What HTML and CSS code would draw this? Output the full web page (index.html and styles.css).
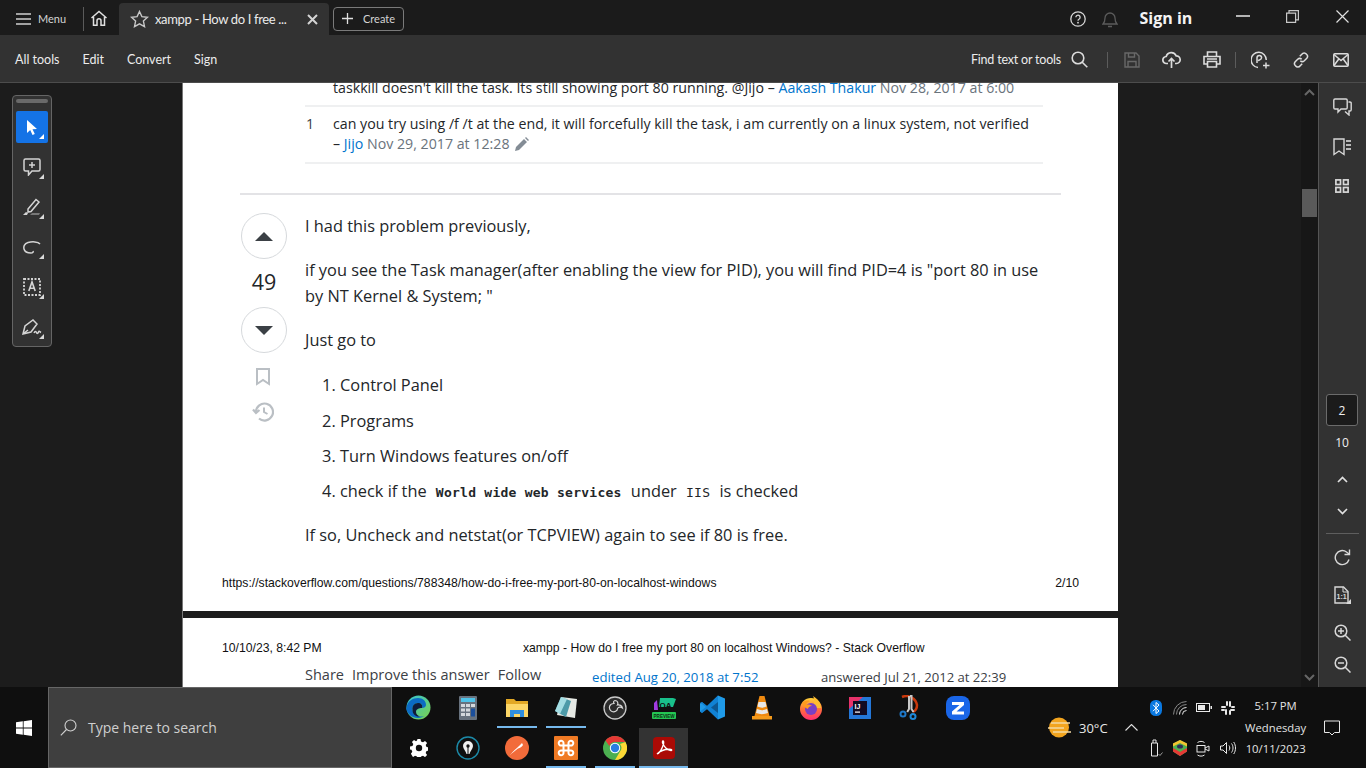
FILE: index.html
```html
<!DOCTYPE html>
<html lang="en">
<head>
<meta charset="utf-8">
<title>xampp - How do I free my port 80 on localhost Windows?</title>
<link rel="stylesheet" href="styles.css">
</head>
<body>
<div class="app">
  <header class="titlebar">
    <button class="menu-btn">
      <svg width="15" height="12" viewBox="0 0 15 12"><path d="M0 1h15M0 6h15M0 11h15" stroke="#d0d0d0" stroke-width="1.4"/></svg>
      <span>Menu</span>
    </button>
    <span class="title-sep"></span>
    <svg class="home" width="18" height="17" viewBox="0 0 18 17" fill="none" stroke="#e0e0e0" stroke-width="1.5"><path d="M1.5 8 9 1.5 16.500 8M3.500 7v8.300h3.500v-4.500a2 2 0 0 1 4 0v4.500h3.500V7"/></svg>
    <div class="tab">
      <svg width="19" height="18" viewBox="0 0 19 18" fill="none" stroke="#c8c8c8" stroke-width="1.4"><path d="m9.500 1.500 2.400 5.100 5.600.7-4.100 3.800 1.100 5.500-5-2.700-5 2.700 1.100-5.500L1.500 7.300l5.600-.7z"/></svg>
      <span class="tab-title">xampp - How do I free ...</span>
      <svg class="tab-close" width="11" height="11" viewBox="0 0 11 11"><path d="m1 1 9 9M10 1l-9 9" stroke="#d4d4d4" stroke-width="2"/></svg>
    </div>
    <button class="create-btn">
      <svg width="11" height="11" viewBox="0 0 11 11"><path d="M5.500 0v11M0 5.500h11" stroke="#e0e0e0" stroke-width="1.300"/></svg>
      <span>Create</span>
    </button>
    <div class="title-right">
      <svg class="help" width="16" height="16" viewBox="0 0 16 16" fill="none"><circle cx="8" cy="8" r="7.200" stroke="#d6d6d6" stroke-width="1.300"/><path d="M5.900 6.300a2.100 2.100 0 1 1 3.300 1.700c-.8.500-1.200.9-1.200 1.700" stroke="#d6d6d6" stroke-width="1.300"/><circle cx="8" cy="11.700" r=".9" fill="#d6d6d6"/></svg>
      <svg class="bell" width="16" height="18" viewBox="0 0 16 18" fill="none" stroke="#5c5c5c" stroke-width="1.300"><path d="M1 14c1.500-1.500 2-2.500 2-6a5 5 0 0 1 10 0c0 3.500.5 4.500 2 6zM6 16.500h4"/></svg>
      <span class="sign-in">Sign in</span>
      <span class="win-ctrl min"><svg width="14" height="2" viewBox="0 0 14 2"><path d="M0 1h14" stroke="#e8e8e8" stroke-width="1.500"/></svg></span>
      <span class="win-ctrl max"><svg width="13" height="13" viewBox="0 0 13 13" fill="none" stroke="#c8c8c8" stroke-width="1.200"><path d="M.6 3.100h9v9.300h-9zM3 3V.6h9.400v9.300H9.800"/></svg></span>
      <span class="win-ctrl cls"><svg width="13" height="13" viewBox="0 0 13 13"><path d="m.5.500 12 12M12.500.500l-12 12" stroke="#e0e0e0" stroke-width="1.200"/></svg></span>
    </div>
  </header>

  <nav class="toolbar">
    <a class="tool-link first">All tools</a>
    <a class="tool-link">Edit</a>
    <a class="tool-link">Convert</a>
    <a class="tool-link">Sign</a>
    <div class="toolbar-right">
      <span class="find">Find text or tools</span>
      <svg class="ic-search" width="17" height="17" viewBox="0 0 17 17" fill="none" stroke="#dcdcdc" stroke-width="1.600"><circle cx="7" cy="7" r="5.800"/><path d="m11 11 5.300 5.300"/></svg>
      <span class="tb-sep"></span>
      <svg class="ic-save" width="16" height="16" viewBox="0 0 16 16" fill="none" stroke="#686868" stroke-width="1.400"><path d="M1 1h11l3 3v11H1zM4.500 1v4h6V1M4 15V9.500h8V15"/></svg>
      <svg class="ic-cloud" width="19" height="18" viewBox="0 0 19 18" fill="none" stroke="#dcdcdc" stroke-width="1.700"><path d="M6 12.500H4.500a3.500 3.500 0 0 1-.3-7 5.300 5.300 0 0 1 10-.6 3.800 3.800 0 0 1 .3 7.600H13M9.500 17V8M6.500 10.500l3-3 3 3"/></svg>
      <svg class="ic-print" width="18" height="17" viewBox="0 0 18 17" fill="none" stroke="#dcdcdc" stroke-width="1.600"><path d="M4.500 5V1h9v4M4 13H1V5.500h16V13h-3M4.500 10.500h9V16h-9zM4 8h10"/></svg>
      <span class="tb-sep s2"></span>
      <svg class="ic-share" width="19" height="18" viewBox="0 0 19 18" fill="none" stroke="#dcdcdc" stroke-width="1.500"><path d="M7 16.500a7.600 7.600 0 1 1 8.300-7.500M6 12V6.800a2.300 2.300 0 0 1 4.600 0c0 2-2.300 2.200-3.600 2.800M15 11.500v6M12 14.500h6.500"/></svg>
      <svg class="ic-link" width="16" height="16" viewBox="0 0 16 16" fill="none" stroke="#dcdcdc" stroke-width="1.500"><path d="m6.800 4.200 2-2a2.900 2.900 0 0 1 4.700 0 2.900 2.900 0 0 1 .3 4l-2.500 2.500a2.900 2.900 0 0 1-4 0M9.200 11.800l-2 2a2.900 2.900 0 0 1-4.700 0 2.900 2.900 0 0 1-.3-4l2.500-2.500a2.900 2.900 0 0 1 4 0"/></svg>
      <svg class="ic-mail" width="16" height="14" viewBox="0 0 16 14" fill="none" stroke="#dcdcdc" stroke-width="1.500"><rect x=".8" y=".8" width="14.400" height="12.400" rx="1"/><path d="m1 1.500 7 6 7-6M1 12.500l4.800-6.500M15 12.500 10.200 6"/></svg>
    </div>
  </nav>

  <main class="workspace">
    <aside class="left-rail">
      <div class="quick-tools">
        <span class="grip"></span>
        <button class="qt active">
          <svg width="14" height="17" viewBox="0 0 14 17"><path d="M2 1v13l3.200-3 2.300 5 2.300-1-2.300-4.800 4.500-.2z" fill="#fff"/></svg>
        </button>
        <button class="qt">
          <svg width="18" height="18" viewBox="0 0 18 18" fill="none" stroke="#d4d4d4" stroke-width="1.500"><path d="M2.500 1h13A1.500 1.500 0 0 1 17 2.500v9a1.500 1.500 0 0 1-1.500 1.500H9l-3.500 4v-4h-3A1.500 1.500 0 0 1 1 11.500v-9A1.500 1.500 0 0 1 2.500 1zM9 4v6M6 7h6"/></svg>
        </button>
        <button class="qt">
          <svg width="20" height="18" viewBox="0 0 20 18" fill="none"><path d="m6 11 8-9.500 3 2.500-8 9.500-3 .5z" stroke="#d4d4d4" stroke-width="1.500"/><path d="M1 17l3-3 2 1-1 2z" fill="#d4d4d4"/><path d="M8 17l2-2h8l-1 2z" fill="#777"/></svg>
        </button>
        <button class="qt">
          <svg width="18" height="13" viewBox="0 0 18 13" fill="none" stroke="#d4d4d4" stroke-width="1.500"><path d="M17 3C15 .5 9 .5 5 1.500S.5 6 1 8s3 4 7 4c2 0 2.500-1 2-2"/></svg>
        </button>
        <button class="qt">
          <svg width="18" height="18" viewBox="0 0 18 18" fill="none"><rect x="1" y="1" width="16" height="16" stroke="#d4d4d4" stroke-width="1.800" stroke-dasharray="2 1.500"/><path d="m5.800 13 3.200-9 3.200 9M7 10.300h4" stroke="#d4d4d4" stroke-width="1.600"/></svg>
        </button>
        <button class="qt">
          <svg width="20" height="17" viewBox="0 0 20 17" fill="none" stroke="#d4d4d4" stroke-width="1.500"><path d="M1 15 3 7l8-6 4 4-6 8zM1 15l5-4M12 14c1-2 2-2 2.500-.5s1.500 1 2-.5 1.500 0 2.500.5"/></svg>
        </button>
      </div>
    </aside>

    <section class="viewer">
      <article class="pdf-page page-one">
        <div class="comment comment-cut">
          <span class="comment-score"></span>
          <p class="comment-body">taskkill doesn't kill the task. Its still showing port 80 running. @Jijo – <a class="link">Aakash Thakur</a> <span class="muted">Nov 28, 2017 at 6:00</span></p>
        </div>
        <div class="comment comment-last">
          <span class="comment-score">1</span>
          <p class="comment-body">can you try using /f /t at the end, it will forcefully kill the task, i am currently on a linux system, not verified – <a class="link">Jijo</a> <span class="muted">Nov 29, 2017 at 12:28</span>
            <svg class="pencil" width="14" height="14" viewBox="0 0 14 14"><path d="m0 14 1-4 8-8 3 3-8 8zM10 1l1-1 3 3-1 1z" fill="#838c95"/></svg></p>
        </div>
        <hr class="answer-rule">
        <div class="answer">
          <div class="votes">
            <span class="vote-btn"><svg width="18" height="9" viewBox="0 0 18 9"><path d="M0 9 9 0l9 9z" fill="#3b4045"/></svg></span>
            <span class="vote-count">49</span>
            <span class="vote-btn"><svg width="18" height="9" viewBox="0 0 18 9"><path d="m0 0 9 9 9-9z" fill="#3b4045"/></svg></span>
            <svg class="vote-mark" width="14" height="18" viewBox="0 0 14 18" fill="none"><path d="M1 1h12v15l-6-4-6 4z" stroke="#babfc4" stroke-width="2"/></svg>
            <svg class="vote-hist" width="22" height="20" viewBox="0 0 22 20" fill="none"><path d="M4 10a8.500 8.500 0 1 1 3 6.500M1 7.500 4 11l3.500-3" stroke="#babfc4" stroke-width="2.200"/><path d="M12 5.500V10l3.500 2" stroke="#babfc4" stroke-width="2"/></svg>
          </div>
          <div class="post">
            <p>I had this problem previously,</p>
            <p>if you see the Task manager(after enabling the view for PID), you will find PID=4 is "port 80 in use by NT Kernel &amp; System; "</p>
            <p>Just go to</p>
            <ol>
              <li>Control Panel</li>
              <li>Programs</li>
              <li>Turn Windows features on/off</li>
              <li>check if the <code>World wide web services</code> under <code class="plain">IIS</code> is checked</li>
            </ol>
            <p>If so, Uncheck and netstat(or TCPVIEW) again to see if 80 is free.</p>
          </div>
        </div>
        <footer class="page-foot">
          <span>https://stackoverflow.com/questions/788348/how-do-i-free-my-port-80-on-localhost-windows</span>
          <span>2/10</span>
        </footer>
      </article>
      <article class="pdf-page page-two">
        <div class="page-head">
          <span>10/10/23, 8:42 PM</span>
          <span>xampp - How do I free my port 80 on localhost Windows? - Stack Overflow</span>
        </div>
        <div class="post-menu">
          <div class="post-actions"><span>Share</span><span>Improve this answer</span><span>Follow</span></div>
          <a class="link edited">edited Aug 20, 2018 at 7:52</a>
          <span class="answered">answered Jul 21, 2012 at 22:39</span>
        </div>
      </article>
    </section>

    <div class="scrollbar">
      <svg width="11" height="7" viewBox="0 0 11 7" fill="none"><path d="m1 6 4.500-4.500L10 6" stroke="#666" stroke-width="2"/></svg>
      <span class="thumb"></span>
      <svg class="scroll-down" width="11" height="7" viewBox="0 0 11 7" fill="none"><path d="m1 1 4.500 4.500L10 1" stroke="#666" stroke-width="2"/></svg>
    </div>

    <aside class="right-rail">
      <svg class="rr-comments" width="19" height="18" viewBox="0 0 19 18" fill="none" stroke="#d8d8d8" stroke-width="1.400"><path d="M2 1h11a1.200 1.200 0 0 1 1.200 1.200v7.600A1.200 1.200 0 0 1 13 11H8l-3 3v-3H2A1.200 1.200 0 0 1 .8 9.800V2.200A1.200 1.200 0 0 1 2 1z"/><path d="M15.500 4H17a1.200 1.200 0 0 1 1.200 1.200v6.600A1.200 1.200 0 0 1 17 13h-1v4l-4-3.500"/></svg>
      <svg class="rr-marks" width="18" height="18" viewBox="0 0 18 18" fill="none"><path d="M1 1h10v15.500l-5-3.500-5 3.500z" stroke="#d8d8d8" stroke-width="1.400"/><path d="M13 3h5M13 7h5M13 11h5" stroke="#b8b8b8" stroke-width="1.800"/></svg>
      <svg class="rr-grid" width="14" height="14" viewBox="0 0 14 14" fill="none" stroke="#d8d8d8" stroke-width="1.700"><rect x=".9" y=".9" width="4.600" height="4.600"/><rect x="8.500" y=".9" width="4.600" height="4.600"/><rect x=".9" y="8.500" width="4.600" height="4.600"/><rect x="8.500" y="8.500" width="4.600" height="4.600"/></svg>
      <span class="rr-page">2</span>
      <span class="rr-total">10</span>
      <svg class="rr-up" width="11" height="7" viewBox="0 0 11 7" fill="none"><path d="m1 6 4.500-4.500L10 6" stroke="#e0e0e0" stroke-width="1.700"/></svg>
      <svg class="rr-down" width="11" height="7" viewBox="0 0 11 7" fill="none"><path d="m1 1 4.500 4.500L10 1" stroke="#e0e0e0" stroke-width="1.700"/></svg>
      <span class="rr-rule"></span>
      <svg class="rr-rotate" width="17" height="17" viewBox="0 0 17 17" fill="none" stroke="#d8d8d8" stroke-width="1.400"><path d="M15 10.500A7 7 0 1 1 12.500 3L15 5"/><path d="M15.500 .5V5.500h-5"/></svg>
      <svg class="rr-fit" width="17" height="18" viewBox="0 0 17 18" fill="none"><path d="M1 1h8.500L14 5.500V17H1z" stroke="#d8d8d8" stroke-width="1.400"/><path d="M9 1v5h5" stroke="#d8d8d8" stroke-width="1"/><text x="2.500" y="13" class="fit-text">1:1</text><path d="M17 13v5h-5z" fill="#d8d8d8"/></svg>
      <svg class="rr-zin" width="17" height="17" viewBox="0 0 17 17" fill="none" stroke="#d8d8d8" stroke-width="1.500"><circle cx="7" cy="7" r="5.800"/><path d="m11 11 5.500 5.500M7 4v6M4 7h6"/></svg>
      <svg class="rr-zout" width="17" height="17" viewBox="0 0 17 17" fill="none" stroke="#d8d8d8" stroke-width="1.500"><circle cx="7" cy="7" r="5.800"/><path d="m11 11 5.500 5.500M4 7h6"/></svg>
    </aside>
  </main>

  <footer class="taskbar">
    <span class="start"><svg width="16" height="16" viewBox="0 0 16 16"><path d="M0 2.300 6.800 1.300v6.300H0zM7.600 1.200 16 0v7.600H7.600zM0 8.400h6.800v6.300L0 13.700zM7.600 8.400H16V16l-8.400-1.200z" fill="#fff"/></svg></span>
    <div class="searchbox">
      <svg width="17" height="17" viewBox="0 0 17 17" fill="none" stroke="#d0d0d0" stroke-width="1.100"><circle cx="10.500" cy="6.500" r="5.500"/><path d="M6.500 10.500.8 16.300"/></svg>
      <span>Type here to search</span>
    </div>
    <div class="task-grid">
      <span class="task"><svg width="25" height="25" viewBox="0 0 25 25"><defs><linearGradient id="edgeA" x1="0" y1="0" x2="1" y2="1"><stop offset="0" stop-color="#36c5d8"/><stop offset="1" stop-color="#7bd24a"/></linearGradient></defs><circle cx="12.500" cy="12.500" r="12" fill="url(#edgeA)"/><path d="M.5 13C1 6 7 3 12 3c5 0 8 3 8 7 0 2-2 3-4 3 1-3-1-5-4-5-4 0-6 3-5.500 7 .5 4 5 8 12 6a12 12 0 0 1-18.500-8z" fill="#0b6bc4"/><path d="M12 8c3 0 5 2 4 5-3 0-6 1-6 4 0 2 1.800 3.500 4 4.500C9 22 6.500 18.500 6.500 15 6 11 8 8 12 8z" fill="#0f1c3a"/></svg></span>
      <span class="task"><svg width="18" height="24" viewBox="0 0 18 24"><rect width="18" height="24" rx="1" fill="#68727e"/><rect x="2" y="2" width="14" height="4" fill="#4fc3e8"/><g fill="#d4d8dc"><rect x="2" y="8" width="4" height="3"/><rect x="7" y="8" width="4" height="3"/><rect x="12" y="8" width="4" height="3"/><rect x="2" y="12.500" width="4" height="3"/><rect x="7" y="12.500" width="4" height="3"/><rect x="2" y="17" width="4" height="3"/><rect x="7" y="17" width="4" height="3"/></g><rect x="12" y="12.500" width="4" height="8" fill="#1b4f9c"/></svg></span>
      <span class="task run split"><svg width="22" height="20" viewBox="0 0 22 20"><path d="M0 1h8l2 2h12v16H0z" fill="#e2a825"/><path d="M0 6h22v13H0z" fill="#fcd667"/><path d="M4 19v-7h14v7h-4v-3H8v3z" fill="#2f8ee0"/></svg></span>
      <span class="task run"><svg width="24" height="24" viewBox="0 0 24 24"><path d="M7 1 23 3l-2 19-18-3z" fill="#e6e9e4"/><path d="M7 1 1 15l11 6 5-16z" fill="#4d9aa8"/><path d="M7 1 1 15l5 3L13 3z" fill="#a4dde3"/></svg></span>
      <span class="task"><svg width="24" height="24" viewBox="0 0 24 24" fill="none"><circle cx="12" cy="12" r="11" fill="#2b2b2b" stroke="#c8c8c8" stroke-width="1.300"/><path d="M12 4.500c2.500 0 3.500 2.500 2.500 4.500 2-.5 4.500.5 5 3-2-1.500-4-1-5 .5 0 2.500-3 4-5.500 3-2-.8-3.200-3.500-2.300-5.500.8-1.800 2.400-2.500 4.300-2.500-.8-1.300-.6-2.500 1-3z" stroke="#d8d8d8" stroke-width="1.200" fill="none"/></svg></span>
      <span class="task"><svg width="26" height="26" viewBox="0 0 26 26"><path d="M9 3h13l3 1-3 8H8z" fill="#19c08b"/><path d="M3 8 6 5l1 10H3z" fill="#a03be0"/><text x="8.500" y="13" class="qa-text">QA</text><rect x="1" y="17" width="24" height="7" rx="1" fill="#24c653"/><text x="2.500" y="22.800" class="qa-small">PREVIEW</text></svg></span>
      <span class="task"><svg width="25" height="25" viewBox="0 0 25 25"><path d="M18 .5 25 3.500v18L18 24.500 7 14 2 18l-2-1.500V8.500L2 7l5 4z" fill="#1f9ae8"/><path d="M18 7v11l-7-5.500z" fill="#0f0f0f"/><path d="M18 .5v24L7 14l-5 4-2-1.500 6-4.500L0 7.500 2 7l5 4z" fill="#0b78cc" opacity=".7"/></svg></span>
      <span class="task"><svg width="20" height="24" viewBox="0 0 20 24"><path d="M7.500 0h5l5 20h-15z" fill="#f08a10"/><path d="M6.500 6h7l1 4.500c-3 1.500-6 1.500-9 0z" fill="#e8e8e8"/><path d="M5 13c3 1.500 7 1.500 10 0l1 4c-4 1.500-8 1.500-12 0z" fill="#e8e8e8"/><path d="M0 20h20v3.500H0z" fill="#f59a1a"/></svg></span>
      <span class="task"><svg width="24" height="24" viewBox="0 0 24 24"><defs><linearGradient id="ffA" x1="0" y1="0" x2="0" y2="1"><stop offset="0" stop-color="#ffd33a"/><stop offset=".5" stop-color="#ff7139"/><stop offset="1" stop-color="#ff2d75"/></linearGradient></defs><circle cx="12" cy="13" r="11" fill="url(#ffA)"/><path d="M14 0c5 3 8 7 8 12H12c4-3 4-8 2-12z" fill="#ffbd2f"/><circle cx="12" cy="13" r="6" fill="#7a3fc4"/><path d="M3 7c2-2 5-3 8-2-3 1-4 3-4 4 2-1 5 0 6 1-3 0-4 2-4 3-3-1-5-3-6-6z" fill="#ff9a1f"/></svg></span>
      <span class="task"><svg width="22" height="22" viewBox="0 0 22 22"><rect width="22" height="22" fill="#2477d8"/><path d="M0 0h14L0 12z" fill="#e8326a"/><rect x="4" y="4" width="14" height="14" fill="#120b22"/><text x="5.500" y="11.500" class="ij-text">IJ</text><rect x="6" y="14.500" width="5" height="1.200" fill="#fff"/></svg></span>
      <span class="task"><svg width="20" height="25" viewBox="0 0 20 25" fill="none"><path d="M3 2c7-3 14 2 15 8 0 3-2 6-4 7" stroke="#c8380c" stroke-width="2.500"/><path d="M10 1v13l-1.800 3M11 1h1.500v13l2 3" stroke="#c8c8c8" stroke-width="2"/><circle cx="4" cy="19" r="2.500" stroke="#1e78c8" stroke-width="2"/><circle cx="14" cy="21.500" r="2.500" stroke="#1e88d8" stroke-width="2"/></svg></span>
      <span class="task"><svg width="24" height="24" viewBox="0 0 24 24"><rect width="24" height="24" rx="8" fill="#1a66e8"/><path d="M6 6h12v3l-7.500 6.500H18v3H6v-3L13.500 9H6z" fill="#fff"/></svg></span>

      <span class="task"><svg width="18" height="18" viewBox="0 0 18 18"><path d="M7.500 0h3l.5 2.500 2 .8 2-1.400 2.100 2.100-1.400 2 .8 2 2.500.5v3l-2.500.5-.8 2 1.400 2-2.100 2.100-2-1.400-2 .8-.5 2.500h-3l-.5-2.500-2-.8-2 1.400L.9 14.800l1.400-2-.8-2L0 10.500v-3l2.500-.5.8-2-1.400-2L4 .9l2 1.400 1-.8z" fill="#fff"/><circle cx="9" cy="9" r="3.200" fill="#0f0f0f"/></svg></span>
      <span class="task"><svg width="24" height="24" viewBox="0 0 24 24" fill="none"><circle cx="12" cy="12" r="11" stroke="#1c8aa8" stroke-width="1.400"/><path d="M7 10a5 5 0 0 1 10 0c0 3-3 5-3.500 8h-3C10 15 7 13 7 10z" fill="#f0f0f0"/><circle cx="12" cy="10" r="1.700" fill="#111"/><path d="M12 11v7" stroke="#111"/></svg></span>
      <span class="task"><svg width="24" height="24" viewBox="0 0 24 24"><circle cx="12" cy="12" r="12" fill="#f26b3a"/><path d="M5 19c3-4 7-7 9-9l3-3 1 2c-1 2-3 3-5 3.500C10 15 7 17 5 19z" fill="#fff"/></svg></span>
      <span class="task run"><svg width="24" height="24" viewBox="0 0 24 24" fill="none"><rect width="24" height="24" rx="1" fill="#f07a24"/><path d="M9.500 9.500H7.300a2.400 2.400 0 1 1 2.200-2.400v2.400zM14.500 9.500h2.200a2.400 2.400 0 1 0-2.200-2.400v2.400zM9.500 14.500H7.300a2.400 2.400 0 1 0 2.200 2.400v-2.400zM14.500 14.500h2.200a2.400 2.400 0 1 1-2.200 2.400v-2.400zM9.500 9.500h5v5h-5z" stroke="#fff" stroke-width="2"/></svg></span>
      <span class="task run"><svg width="24" height="24" viewBox="0 0 24 24"><circle cx="12" cy="12" r="12" fill="#4caf50"/><path d="M12 0a12 12 0 0 1 10.400 6H12a6 6 0 0 0-5.700 4L2.500 4.500A12 12 0 0 1 12 0z" fill="#e53935"/><path d="M22.400 6A12 12 0 0 1 12 24l5-8.500A6 6 0 0 0 17 8z" fill="#fdd835"/><circle cx="12" cy="12" r="5.200" fill="#fff"/><circle cx="12" cy="12" r="4.200" fill="#2a7de1"/></svg></span>
      <span class="task run acrobat"><svg width="22" height="22" viewBox="0 0 22 22" fill="none"><rect width="22" height="22" rx="4" fill="#aa0a05"/><path d="M4 17c3-1 5-5 6.500-10 .5-2 0-3-.5-3s-1 1 0 3c1.500 3 4 6 8 6.500 1 0 1-1 0-1.200C14 12 8 13 4 17z" stroke="#fff" stroke-width="1.300"/></svg></span>
    </div>
    <div class="tray">
      <div class="weather">
        <svg width="23" height="21" viewBox="0 0 23 21"><circle cx="11" cy="10.500" r="10" fill="#f2a41f"/><path d="M3 6h19M0 11h16M5 15h18" stroke="#f4d9a2" stroke-width="1.600"/></svg>
        <span>30°C</span>
      </div>
      <svg class="tray-chevron" width="13" height="7" viewBox="0 0 13 7" fill="none"><path d="m.5 6.500 6-6 6 6" stroke="#e0e0e0" stroke-width="1.100"/></svg>
      <div class="tray-icons">
        <span><svg width="12" height="16" viewBox="0 0 12 16"><rect width="12" height="16" rx="5.500" fill="#0a78e0"/><path d="m3 4.800 6 6.200-3 2.500V2.500l3 2.500-6 6.200" fill="none" stroke="#fff" stroke-width="1"/></svg></span>
        <span><svg width="14" height="14" viewBox="0 0 14 14" fill="none" stroke="#e8e8e8" stroke-width="1"><path d="M.5 13.500a13 13 0 0 1 13-13M3.500 13.500a10 10 0 0 1 10-10" stroke="#888"/><path d="M6.500 13.500a7 7 0 0 1 7-7M9.500 13.500a4 4 0 0 1 4-4"/></svg></span>
        <span><svg width="16" height="9" viewBox="0 0 16 9"><rect x=".5" y=".5" width="13" height="8" fill="none" stroke="#e8e8e8"/><rect x="2" y="2" width="7" height="5" fill="#e8e8e8"/><rect x="14.500" y="3" width="1.500" height="3" fill="#e8e8e8"/></svg></span>
        <span><svg width="14" height="14" viewBox="0 0 14 14" fill="#e8e8e8"><rect x="5" y="0" width="2" height="5" rx="1"/><rect x="0" y="5" width="5" height="2" rx="1"/><rect x="8" y="0" width="2" height="6" rx="1"/><rect x="10" y="5" width="4" height="2" rx="1"/><rect x="9" y="8" width="5" height="2" rx="1"/><rect x="8" y="9" width="2" height="5" rx="1"/><rect x="4" y="8" width="2" height="6" rx="1"/><rect x="0" y="8" width="4" height="2" rx="1"/></svg></span>
        <span><svg width="14" height="18" viewBox="0 0 14 18" fill="none" stroke="#e8e8e8"><path d="M2.500 4h6v13h-6zM4 4V1h3v3"/><path d="m9.500 15 1.500 1.500 2.500-3" stroke="#999"/></svg></span>
        <span><svg width="16" height="16" viewBox="0 0 16 16"><path d="M8 0l7 3.500v8L8 16l-7-4.500v-8z" fill="#4caf50"/><path d="M1 8l7 4 7-4v3.500L8 16l-7-4.500z" fill="#e53935"/><path d="M8 0l7 3.500v3L8 3 1 6.500v-3z" fill="#f2c230"/><ellipse cx="8" cy="6.500" rx="3" ry="2" fill="#2f2a5a"/></svg></span>
        <span><svg width="15" height="17" viewBox="0 0 15 17" fill="none" stroke="#e8e8e8"><rect x="1" y="5.500" width="8" height="6.500"/><path d="m9 8 4-2v5l-4-2M1.500 2.500c2-1.500 5-1.500 7 0M1.500 15c2 1.500 5 1.500 7 0"/></svg></span>
        <span><svg width="16" height="14" viewBox="0 0 16 14" fill="none" stroke="#e8e8e8"><path d="M.5 5h2.500L6.500 1.500v11L3 9H.5zM9 4.500c1 1.500 1 3.500 0 5M11.500 2.500c2 2.500 2 6.500 0 9M13.700 1c2.400 3.500 2.400 8.500 0 12"/></svg></span>
      </div>
      <div class="clock">
        <span>5:17 PM</span>
        <span>Wednesday</span>
        <span>10/11/2023</span>
      </div>
      <svg class="notif" width="16" height="16" viewBox="0 0 16 16" fill="none"><path d="M.5 1h15v11.500h-5L8 15l-2.500-2.500h-5z" stroke="#e8e8e8"/></svg>
    </div>
  </footer>
</div>
</body>
</html>
```

FILE: styles.css
```css
* { box-sizing: border-box; }
html, body { margin: 0; height: 100%; overflow: hidden; }
body { font-family: "Open Sans", "Noto Sans", sans-serif; background: #1c1c1c; color: #e8e8e8; }
button { font: inherit; color: inherit; background: none; border: 0; padding: 0; }
p { margin: 0; }
.app { width: 1366px; height: 768px; display: flex; flex-direction: column; }

.titlebar { height: 35px; padding-top: 2px; background: #1b1b1b; display: flex; align-items: center; flex: none; font-family: Lato, "Open Sans", sans-serif; }
.menu-btn { display: flex; align-items: center; margin-left: 16px; font-size: 11px; color: #d4d4d4; gap: 7px; width: 67px; }
.title-sep { width: 1px; height: 24px; background: #5a5a5a; }
.home { margin-left: 6px; }
.tab { margin-left: 11px; width: 210px; height: 32px; margin-top: 1px; align-self: flex-start; background: #323232; border-radius: 4px 4px 0 0; display: flex; align-items: center; padding-left: 11px; }
.tab-title { margin-left: 6px; font-size: 13px; letter-spacing: -0.35px; color: #ebebeb; width: 152px; white-space: nowrap; }
.create-btn { margin-left: 4px; width: 71px; height: 24px; border: 1px solid #7a7a7a; border-radius: 4px; display: flex; align-items: center; padding-left: 8px; gap: 10px; font-size: 11px; color: #d4d4d4; }
.title-right { margin-left: auto; display: flex; align-items: center; height: 33px; }
.help { margin-right: 16px; }
.bell { margin-right: 22px; }
.sign-in { font-family: "Open Sans", sans-serif; font-weight: 700; font-size: 16px; color: #f4f4f4; width: 79px; white-space: nowrap; margin-top: -1px; }
.win-ctrl { display: flex; justify-content: center; width: 49.500px; margin-top: -5px; }
.win-ctrl.cls { margin-right: -1px; }

.toolbar { height: 48px; padding-top: 2px; background: #323232; border-bottom: 1px solid #4c4c4c; display: flex; align-items: center; flex: none; font-family: Lato, "Open Sans", sans-serif; font-size: 12.500px; color: #ececec; }
.tool-link { margin-left: 23px; }
.tool-link.first { margin-left: 15px; }
.toolbar-right { margin-left: auto; display: flex; align-items: center; padding-right: 17px; letter-spacing: -0.2px; }
.find { margin-right: 10px; white-space: nowrap; }
.tb-sep { width: 1px; height: 16px; background: #5c5c5c; margin: 0 16px 0 19px; }
.tb-sep.s2 { margin: 0 15px 0 14px; }
.ic-cloud { margin-left: 22px; }
.ic-print { margin-left: 22px; }
.ic-link { margin-left: 23px; }
.ic-mail { margin-left: 24px; }

.workspace { flex: 1; min-height: 0; display: flex; overflow: hidden; background: #1c1c1c; }
.left-rail { width: 183px; flex: none; padding: 12px 0 0 12px; border-right: 1px solid #777; }
.quick-tools { width: 40px; height: 252px; background: #323232; border: 1px solid #656565; border-radius: 4px; display: flex; flex-direction: column; align-items: center; padding-top: 3px; overflow: hidden; }
.grip { width: 32px; height: 4px; background: #6a6a6a; border-radius: 2px; margin-bottom: 8px; flex: none; }
.qt { width: 32px; height: 32px; margin-bottom: 8px; display: flex; align-items: center; justify-content: center; position: relative; flex: none; }
.qt::after { content: ""; position: absolute; right: 4px; bottom: 4px; border-left: 5px solid transparent; border-bottom: 5px solid #d8d8d8; }
.qt.active { background: #1473e6; border-radius: 2px; }
.qt.active::after { border-bottom-color: #fff; }

.viewer { width: 1118px; flex: 1; min-width: 0; overflow: hidden; display: flex; flex-direction: column; gap: 7px; }
.pdf-page { width: 935px; background: #fff; color: #232629; flex: none; overflow: hidden; font-size: 16.350px; }
.page-one { height: 528px; display: flex; flex-direction: column; padding: 0 39px 0 0; }
.page-two { height: 90px; }
.comment { margin-left: 122px; width: 738px; display: flex; font-size: 14.200px; line-height: 20px; border-bottom: 2px solid #eff0f1; color: #232629; flex: none; }
.comment-score { width: 28px; padding-left: 1px; flex: none; color: #3b4045; }
.comment-body { flex: 1; padding-right: 10px; }
.comment-cut { margin-top: -5px; padding-bottom: 7px; }
.comment-last { padding: 7px 0 8px; }
.link { color: #0074cc; }
.muted { color: #6a737c; }
.pencil { vertical-align: -2px; margin-left: 2px; }
.answer-rule { margin: 29px 18px 0 57px; border: 0; height: 2px; background: #e3e3e6; flex: none; width: 821px; }
.answer { display: flex; padding: 18px 0 0 57px; }
.votes { width: 65px; flex: none; display: flex; flex-direction: column; align-items: flex-start; }
.vote-btn { width: 46px; height: 46px; margin-left: 1px; border: 1px solid #d6d9dc; border-radius: 50%; display: flex; align-items: center; justify-content: center; flex: none; }
.vote-count { width: 46px; margin-left: 1px; text-align: center; font-size: 21.500px; line-height: 46px; padding-bottom: 2px; color: #232629; }
.vote-mark { margin: 15px 0 0 16px; }
.vote-hist { margin: 16px 0 0 12px; }
.post { width: 740px; line-height: 26px; }
.post p { margin-bottom: 18px; }
.post ol { margin: 19px 0 18px; padding: 0 0 0 35px; }
.post li { margin-bottom: 9.500px; }
.post li:last-child { margin: -1px 0 0; }
code { font-family: "DejaVu Sans Mono", monospace; font-size: 13px; letter-spacing: .25px; line-height: 1; font-weight: 700; margin: 0 5px; }
code.plain { font-weight: 400; }
.page-foot { margin-top: auto; margin-left: 39px; padding-bottom: 21px; display: flex; justify-content: space-between; font-family: "Liberation Sans", Arial, sans-serif; font-size: 12.200px; line-height: 14px; color: #111; }
.page-head { padding: 23px 0 0 39px; display: grid; grid-template-columns: 301px 1fr; font-family: "Liberation Sans", Arial, sans-serif; font-size: 12.200px; line-height: 14px; color: #111; }
.post-menu { margin: 9px 0 0 122px; display: grid; grid-template-columns: 287px 229px 1fr; align-items: center; line-height: 18px; }
.post-actions { display: flex; gap: 8px; font-size: 14.500px; color: #3b4045; }
.edited { font-size: 13.200px; padding-top: 4px; }
.answered { font-size: 13.100px; color: #3b4045; padding-top: 4px; }

.scrollbar { width: 17px; flex: none; background: #171717; display: flex; flex-direction: column; align-items: center; padding-top: 6px; }
.thumb { width: 15px; height: 28px; margin-top: 93px; background: #5a5a5a; flex: none; }
.scroll-down { margin-top: auto; margin-bottom: 6px; }
.right-rail { width: 48px; flex: none; background: #323232; border-left: 1px solid #555; display: flex; flex-direction: column; align-items: center; padding-right: 1px; }
.rr-comments { margin-top: 15px; }
.rr-marks { margin-top: 22px; }
.rr-grid { margin-top: 23px; }
.rr-page { margin-top: 201px; width: 32px; height: 32px; flex: none; background: #1b1b1b; border: 1px solid #6b6b6b; border-radius: 3px; display: flex; align-items: center; justify-content: center; font-size: 12px; color: #f0f0f0; }
.rr-total { margin-top: 8px; font-size: 12px; line-height: 18px; color: #f0f0f0; }
.rr-up { margin-top: 24px; }
.rr-down { margin-top: 25px; }
.rr-rule { width: 33px; height: 1px; background: #5e5e5e; margin-top: 18px; flex: none; }
.rr-rotate { margin-top: 15px; }
.rr-fit { margin-top: 20px; }
.rr-zin { margin-top: 20px; }
.rr-zout { margin-top: 15px; }
.fit-text { font-family: "Liberation Sans", sans-serif; font-size: 7px; font-weight: 700; fill: #d8d8d8; }
.qa-text { font-family: "Liberation Sans", sans-serif; font-size: 8px; font-weight: 700; fill: #111; }
.qa-small { font-family: "Liberation Sans", sans-serif; font-size: 4.600px; font-weight: 700; fill: #0c3014; }
.ij-text { font-family: "Liberation Sans", sans-serif; font-size: 7px; font-weight: 700; fill: #fff; }

.taskbar { height: 81px; flex: none; background: #0f0f0f; display: flex; }
.start { width: 48px; display: flex; align-items: center; justify-content: center; }
.searchbox { width: 344px; background: #3f3f3f; border: 1px solid #666; display: flex; align-items: center; padding-left: 11px; gap: 11px; font-size: 14px; color: #cfcfcf; }
.task-grid { margin-left: 2px; display: grid; grid-template-columns: repeat(12, 49px); grid-template-rows: 41px 40px; }
.task { display: flex; align-items: center; justify-content: center; position: relative; }
.task.run::after { content: ""; position: absolute; left: 5px; right: 4px; bottom: 0; height: 2px; background: #76b9ed; }
.task.acrobat { background: #333; }
.task.acrobat::after { left: 0; right: 0; }
.tray { margin-left: auto; display: flex; align-items: center; color: #e8e8e8; font-size: 13px; width: 318px; }
.weather { display: flex; align-items: center; gap: 8px; }
.tray-chevron { margin-left: 17px; }
.tray-icons { margin-left: 6px; display: grid; grid-template-columns: repeat(4, 24px); grid-template-rows: 41px 40px; height: 81px; flex: none; }
.tray-icons span { display: flex; align-items: center; justify-content: center; }
.clock { width: 72px; flex: none; display: flex; flex-direction: column; align-items: center; font-size: 11.300px; line-height: 21.500px; color: #e4e4e4; white-space: nowrap; }
.notif { margin-left: 12px; }
```
